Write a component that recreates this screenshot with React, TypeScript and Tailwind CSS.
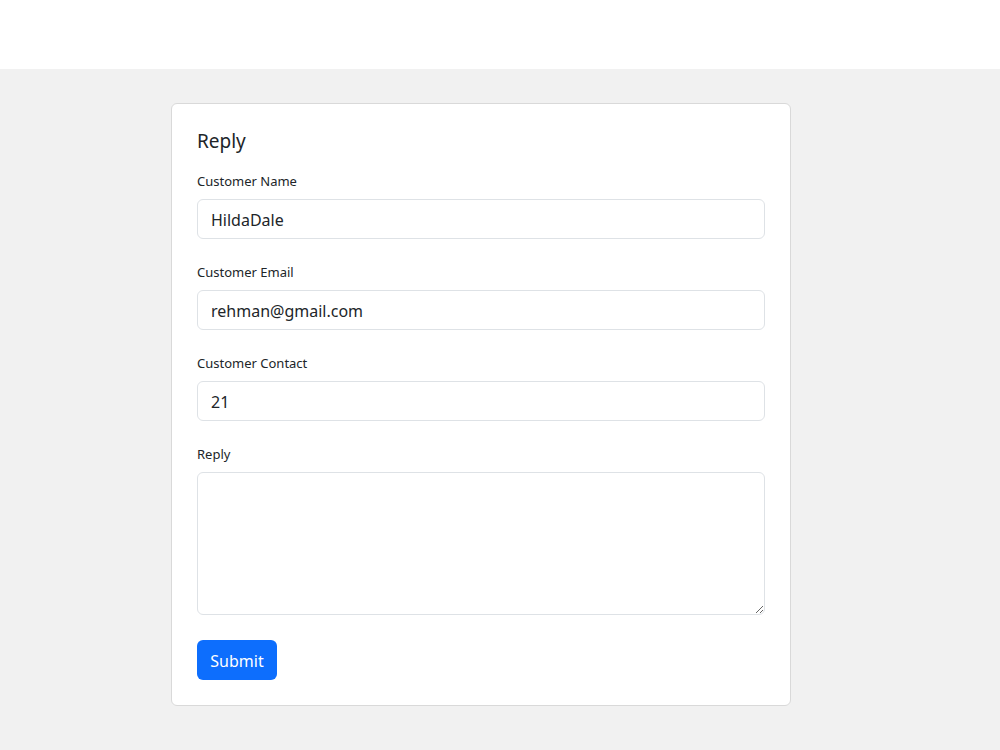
export default function App() {
    return (
        <div className="min-h-[750px] bg-[#f1f1f1] text-[#212529]" style={{ fontFamily: '"Noto Sans", "Open Sans", sans-serif' }}>
            <div className="h-[69px] bg-white"></div>
            <div className="flex justify-center pt-[34px] pr-[38px]">
                <div className="w-[620px] bg-white border border-[#d9d9d9] rounded-[6px] px-[25px] pt-[25px] pb-[25px]">
                    <h5 className="text-[19px] leading-[24px] mb-[17px]">Reply</h5>
                    <div className="mb-[22px]">
                        <label className="block text-[13px] leading-[23px] mb-[6px]">Customer Name</label>
                        <input
                            type="text"
                            defaultValue="HildaDale"
                            className="w-full h-[40px] px-[13px] pt-[1px] text-[16px] border border-[#dee2e6] rounded-[6px] outline-none text-[#212529]"
                        />
                    </div>
                    <div className="mb-[22px]">
                        <label className="block text-[13px] leading-[23px] mb-[6px]">Customer Email</label>
                        <input
                            type="email"
                            defaultValue="rehman@gmail.com"
                            className="w-full h-[40px] px-[13px] pt-[1px] text-[16px] border border-[#dee2e6] rounded-[6px] outline-none text-[#212529]"
                        />
                    </div>
                    <div className="mb-[22px]">
                        <label className="block text-[13px] leading-[23px] mb-[6px]">Customer Contact</label>
                        <input
                            type="text"
                            defaultValue="21"
                            className="w-full h-[40px] px-[13px] pt-[1px] text-[16px] border border-[#dee2e6] rounded-[6px] outline-none text-[#212529]"
                        />
                    </div>
                    <div className="mb-[25px]">
                        <label className="block text-[13px] leading-[23px] mb-[6px]">Reply</label>
                        <textarea className="block w-full h-[143px] px-[13px] py-[6px] text-[16px] border border-[#dee2e6] rounded-[6px] outline-none"></textarea>
                    </div>
                    <button
                        type="submit"
                        className="h-[40px] w-[80px] pt-[1px] bg-[#0d6efd] text-white text-[16px] rounded-[6px]"
                    >
                        Submit
                    </button>
                </div>
            </div>
        </div>
    )
}
